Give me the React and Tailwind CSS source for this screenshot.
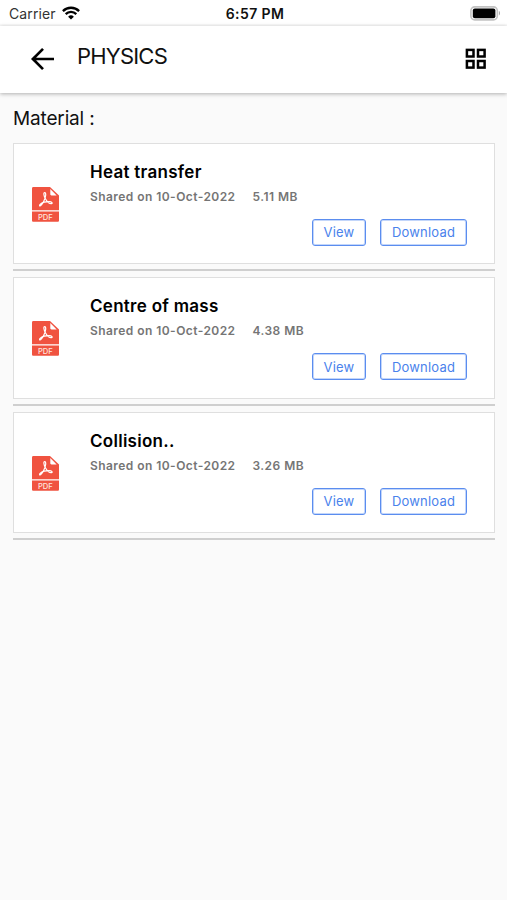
import React from 'react';

const materials = [
  { id: 1, title: 'Heat transfer', date: '10-Oct-2022', size: '5.11 MB' },
  { id: 2, title: 'Centre of mass', date: '10-Oct-2022', size: '4.38 MB' },
  { id: 3, title: 'Collision..', date: '10-Oct-2022', size: '3.26 MB' },
];

const WifiIcon = () => (
  <svg width="18" height="14" viewBox="0 0 18 14" fill="none" stroke="#000" strokeWidth="2.3">
    <path d="M0.9 5.1a11.5 11.5 0 0 1 16.2 0" />
    <path d="M3.7 8.1a7.5 7.5 0 0 1 10.6 0" />
    <path d="M9 13.6 6.1 10.7a4.1 4.1 0 0 1 5.8 0Z" fill="#000" stroke="none" />
  </svg>
);

const BatteryIcon = () => (
  <svg width="31" height="15" viewBox="0 0 31 15">
    <rect x="0.9" y="0.9" width="26.4" height="13" rx="3.8" fill="#fff" stroke="#c2c2c2" strokeWidth="1.6" />
    <rect x="2.8" y="2.6" width="22.6" height="9.6" rx="2" fill="#000" />
    <path d="M28.9 5.1c1.4.5 1.4 3.9 0 4.4Z" fill="#a3a3a3" />
  </svg>
);

const BackIcon = () => (
  <svg width="24" height="24" viewBox="0 0 24 24" fill="none" stroke="#000" strokeWidth="2.7">
    <path d="M24 12H3.2M13 1.9 2.9 12 13 22.1" />
  </svg>
);

const GridIcon = () => (
  <svg width="22" height="22" viewBox="0 0 22 22" fill="none" stroke="#000" strokeWidth="2.5">
    <rect x="1.9" y="1.9" width="6.6" height="6.6" />
    <rect x="13" y="1.9" width="6.6" height="6.6" />
    <rect x="1.9" y="13" width="6.6" height="6.6" />
    <rect x="13" y="13" width="6.6" height="6.6" />
  </svg>
);

const PdfIcon = () => (
  <svg width="27" height="35" viewBox="0 0 27 35">
    <path d="M1.3 0H18l9 8.6v14.6H0V1.3C0 .6.6 0 1.3 0Z" fill="#f05340" />
    <path d="M18.3 2v5.2c0 .7.5 1.2 1.2 1.2h5.2Z" fill="#fff" />
    <path d="M0 24.6h27v8.8c0 .7-.6 1.3-1.3 1.3H1.3c-.7 0-1.3-.6-1.3-1.3Z" fill="#f05340" />
    <path
      d="M12.8 5.6c-1.5 0-1.1 3 .6 6.1 1.7 3 4.2 5.2 6 5 1.6-.3.7-2-2.3-2-3.3 0-6.8.9-8.5 2.2-1.9 1.5-1 2.7.4 1.5 1.7-1.5 4.4-6.9 4.700-10.1.1-1.700-.2-2.700-.9-2.700Z"
      fill="none"
      stroke="#fff"
      strokeWidth="1.2"
    />
    <text x="13.3" y="32.6" textAnchor="middle" fontSize="7.6" fontFamily="Inter, sans-serif" fontWeight="500" fill="#ffe4df">
      PDF
    </text>
  </svg>
);

const buttonClass =
  'h-[27px] rounded-[3px] border border-[#5b8def] text-[13px] tracking-[0.2px] text-[#4a82ec] pt-px shadow-[inset_0_0_0_1px_#c3d6fa]';

const MaterialCard = ({ item }) => (
  <li className="mb-[6px] border-b-2 border-[#cfcfcf] pb-[5px]">
    <div className="flex h-[121.3px] border border-[#dfdfdf] bg-white">
      <div className="w-[76px] shrink-0 pl-[17.5px] pt-[43px]">
        <PdfIcon />
      </div>
      <div className="flex-1 pt-[17px] pr-[27px]">
        <h2 className="text-[17px] leading-[22px] font-semibold tracking-[0.28px] text-black">{item.title}</h2>
        <p className="mt-[6px] flex gap-[17px] text-[12px] leading-4 font-semibold text-[#757575]">
          <span className="tracking-[0.44px]">Shared on {item.date}</span>
          <span className="tracking-[0.45px]">{item.size}</span>
        </p>
        <div className="mt-[14px] flex justify-end gap-[14px]">
          <button className={`${buttonClass} w-[54px]`}>View</button>
          <button className={`${buttonClass} w-[87px]`}>Download</button>
        </div>
      </div>
    </div>
  </li>
);

const App = () => {
  return (
    <div className="min-h-screen bg-[#fafafa] font-['Inter',sans-serif] text-[#111]">
      {/* Status bar */}
      <div className="grid h-[26px] grid-cols-3 items-center border-b-2 border-[#fafafa] bg-white pl-[9px] pr-[6px] pt-[2px]">
        <div className="flex items-center gap-[6px]">
          <span className="text-[14px] tracking-[0.1px] text-[#333]">Carrier</span>
          <WifiIcon />
        </div>
        <span className="text-center text-[14px] font-semibold tracking-[0.4px]">6:57 PM</span>
        <div className="flex justify-end">
          <BatteryIcon />
        </div>
      </div>

      {/* Header */}
      <header className="flex h-[67px] items-center bg-white pb-[2px] pl-[30px] pr-[20px] shadow-[0_1px_4px_rgba(0,0,0,0.3)]">
        <BackIcon />
        <h1 className="ml-[23px] pb-[4px] text-[22px] tracking-[-0.8px]">PHYSICS</h1>
        <div className="ml-auto">
          <GridIcon />
        </div>
      </header>

      <main className="pl-[13px] pr-[12px] pt-[12px]">
        <p className="text-[19px] leading-7 tracking-[-0.15px]">Material :</p>
        <ul className="mt-[10px]">
          {materials.map(item => (
            <MaterialCard key={item.id} item={item} />
          ))}
        </ul>
      </main>
    </div>
  );
};

export default App;
